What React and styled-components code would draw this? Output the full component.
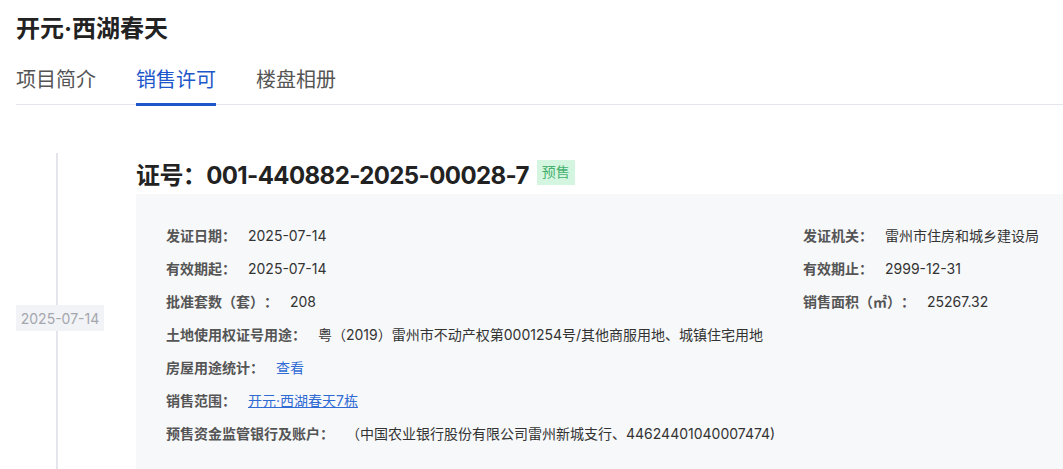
import React from 'react';
import styled, { createGlobalStyle } from 'styled-components';

const GlobalStyle = createGlobalStyle`
  html, body {
    margin: 0;
    padding: 0;
    background: #ffffff;
    overflow: hidden;
  }
  body {
    font-family: Inter, 'Noto Sans CJK SC', sans-serif;
    color: #333333;
    text-spacing-trim: space-all;
  }
`;

const Page = styled.div`
  padding: 0 0 0 16px;
  width: 1047px;
`;

const Title = styled.h1`
  margin: 0;
  height: 52px;
  display: flex;
  align-items: center;
  font-size: 24px;
  font-weight: 700;
  color: #222222;
`;

const Tabs = styled.div`
  display: flex;
  gap: 40px;
  border-bottom: 1px solid #e5e6eb;
`;

const Tab = styled.div`
  position: relative;
  height: 52px;
  display: flex;
  align-items: center;
  font-size: 20px;
  color: ${(p) => (p.$active ? '#1d57c9' : '#555555')};
  &::after {
    content: '';
    display: ${(p) => (p.$active ? 'block' : 'none')};
    position: absolute;
    left: 0;
    right: 0;
    bottom: -2px;
    height: 3px;
    background: #1d57c9;
  }
`;

const Timeline = styled.div`
  margin-top: 48px;
`;

const Item = styled.div`
  display: flex;
`;

const DateCol = styled.div`
  position: relative;
  flex: 0 0 120px;
  display: flex;
  align-items: center;
  &::before {
    content: '';
    position: absolute;
    left: 40px;
    top: 0;
    bottom: 0;
    width: 2px;
    background: #e5e6eb;
  }
`;

const DateTag = styled.span`
  position: relative;
  width: 88px;
  height: 26px;
  margin-top: -6px;
  display: flex;
  align-items: center;
  justify-content: center;
  background: #f2f3f7;
  color: #a3a6ad;
  font-size: 14px;
`;

const Body = styled.div`
  flex: 1;
`;

const Head = styled.div`
  height: 41px;
  display: flex;
  align-items: center;
  gap: 8px;
`;

const CertNo = styled.h2`
  margin: 0;
  font-size: 24px;
  font-weight: 700;
  letter-spacing: -0.6px;
  color: #222222;
`;

const Badge = styled.span`
  margin-top: -2px;
  padding: 1px 5px 2px;
  font-size: 14px;
  line-height: 22px;
  color: #46b06e;
  background: #d4f6e0;
`;

const Panel = styled.div`
  background: #f7f8fa;
  padding: 31px 0 44px 30px;
  display: grid;
  grid-template-columns: 637px 1fr;
  row-gap: 11px;
`;

const Field = styled.div`
  grid-column: ${(p) => (p.$wide ? '1 / -1' : 'auto')};
  display: flex;
  font-size: 14px;
  line-height: 22px;
  white-space: nowrap;
`;

const Label = styled.span`
  font-weight: 600;
  color: #555555;
  margin-right: 12px;
`;

const Value = styled.span`
  color: #333333;
`;

const Link = styled.a`
  color: #2f6bd3;
  text-decoration: ${(p) => (p.$underline ? 'underline' : 'none')};
  cursor: pointer;
`;

const fields = [
  { label: '发证日期：', value: '2025-07-14' },
  { label: '发证机关：', value: '雷州市住房和城乡建设局' },
  { label: '有效期起：', value: '2025-07-14' },
  { label: '有效期止：', value: '2999-12-31' },
  { label: '批准套数（套）：', value: '208' },
  { label: '销售面积（㎡）：', value: '25267.32' },
];

export default function App() {
  return (
    <>
      <GlobalStyle />
      <Page>
        <Title>开元·西湖春天</Title>
        <Tabs>
          <Tab>项目简介</Tab>
          <Tab $active>销售许可</Tab>
          <Tab>楼盘相册</Tab>
        </Tabs>
        <Timeline>
          <Item>
            <DateCol>
              <DateTag>2025-07-14</DateTag>
            </DateCol>
            <Body>
              <Head>
                <CertNo>证号：001-440882-2025-00028-7</CertNo>
                <Badge>预售</Badge>
              </Head>
              <Panel>
                {fields.map((f) => (
                  <Field key={f.label}>
                    <Label>{f.label}</Label>
                    <Value>{f.value}</Value>
                  </Field>
                ))}
                <Field $wide>
                  <Label>土地使用权证号用途：</Label>
                  <Value>粤（2019）雷州市不动产权第0001254号/其他商服用地、城镇住宅用地</Value>
                </Field>
                <Field $wide>
                  <Label>房屋用途统计：</Label>
                  <Link>查看</Link>
                </Field>
                <Field $wide>
                  <Label>销售范围：</Label>
                  <Link $underline>开元·西湖春天7栋</Link>
                </Field>
                <Field $wide>
                  <Label>预售资金监管银行及账户：</Label>
                  <Value>（中国农业银行股份有限公司雷州新城支行、44624401040007474)</Value>
                </Field>
              </Panel>
            </Body>
          </Item>
        </Timeline>
      </Page>
    </>
  );
}
